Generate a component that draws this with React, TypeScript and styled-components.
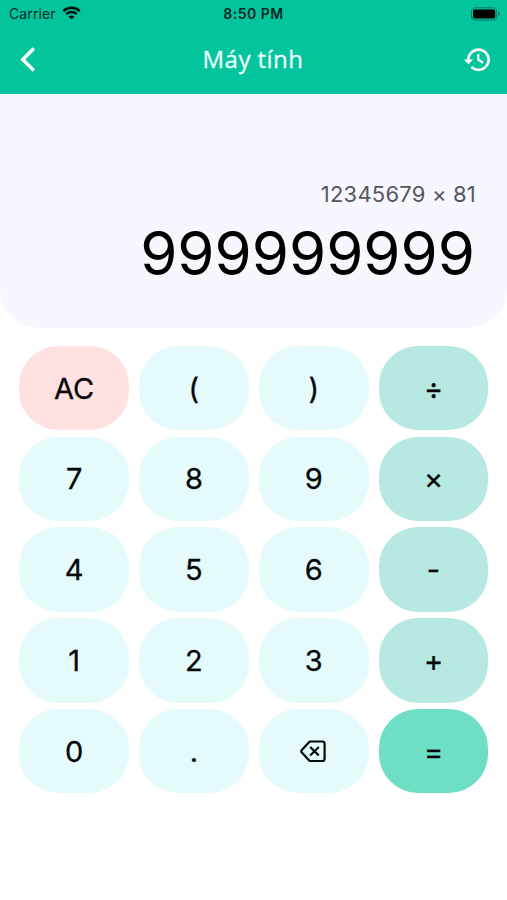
import React from "react";
import styled, { createGlobalStyle } from "styled-components";

const GlobalStyle = createGlobalStyle`
  * { box-sizing: border-box; }
  body { margin: 0; background: #fff; }
`;

const Screen = styled.div`
  width: 100%;
  height: 900px;
  display: flex;
  flex-direction: column;
  overflow: hidden;
  background: #ffffff;
  color: #050808;
  font-family: Inter, "Liberation Sans", sans-serif;
`;

const Header = styled.header`
  height: 94px;
  flex: none;
  background: #04c49e;
`;

const StatusBar = styled.div`
  height: 27px;
  padding: 0 6px 0 9px;
  display: grid;
  grid-template-columns: 1fr auto 1fr;
  align-items: center;
  color: #052a23;
`;

const Carrier = styled.div`
  display: flex;
  align-items: center;
  gap: 6px;
  font-size: 14px;
  line-height: 27px;
  letter-spacing: 0.1px;

  svg { margin-top: -2px; }
`;

const Clock = styled.div`
  font-size: 14px;
  font-weight: 600;
  line-height: 27px;
  letter-spacing: 0.5px;
  margin-right: 3px;
`;

const Battery = styled.svg`
  justify-self: end;
`;

const NavBar = styled.div`
  height: 64px;
  padding: 0 15px 0 13px;
  display: grid;
  grid-template-columns: 30px 1fr 30px;
  align-items: center;
  color: #fff;
`;

const Title = styled.h1`
  margin: 0 0 0 1px;
  text-align: center;
  font-family: "Open Sans", sans-serif;
  font-weight: 400;
  font-size: 24px;
  line-height: 64px;
  letter-spacing: 0.45px;
  -webkit-text-stroke: 0.3px currentColor;
  color: #e9fff9;
`;

const IconButton = styled.button`
  width: 30px;
  height: 30px;
  padding: 0;
  border: 0;
  background: none;
  color: inherit;
  display: flex;
  align-items: center;
  justify-content: center;
`;

const Display = styled.section`
  height: 234px;
  flex: none;
  padding: 85px 31px 0 0;
  border-radius: 0 0 39px 39px;
  background: #f6f7ff;
  text-align: right;
`;

const Expression = styled.div`
  font-size: 22px;
  line-height: 30px;
  letter-spacing: 0.2px;
  color: #56575e;
`;

const Result = styled.div`
  margin: 8px 1px 0 0;
  font-size: 60px;
  font-weight: 400;
  line-height: 72px;
  color: #000;
`;

const Keypad = styled.main`
  padding: 18px 18.6px 0 19.2px;
  display: grid;
  grid-template-columns: repeat(4, 1fr);
  grid-auto-rows: 84.4px;
  gap: 6.35px 10px;
`;

type Tone = "plain" | "clear" | "operator" | "equals";

const tones: Record<Tone, string> = {
  plain: "#e4fafb",
  clear: "#ffe1e2",
  operator: "#b7e8e2",
  equals: "#6edfc5",
};

const Key = styled.button<{ $tone: Tone }>`
  border: 0;
  padding: 1px 0 0;
  border-radius: 39px;
  background: ${(p) => tones[p.$tone]};
  color: #050808;
  font-family: inherit;
  font-size: 29px;
  font-weight: 400;
  -webkit-text-stroke: 0.3px currentColor;
  line-height: 40px;
  display: flex;
  align-items: center;
  justify-content: center;
`;

const WifiIcon = () => (
  <svg width="19" height="14" viewBox="0 0 19 14" fill="none" stroke="#03120f" strokeWidth="2.5">
    <path d="M1.3 5.1C5.9.6 13.1.6 17.7 5.1" />
    <path d="M4.3 8.2c2.9-2.8 7.5-2.8 10.4 0" />
    <path d="M9.5 13.6 6.5 10.5c1.7-1.5 4.3-1.5 6 0Z" fill="#03120f" stroke="none" />
  </svg>
);

const BatteryIcon = () => (
  <Battery width="31" height="14" viewBox="0 0 31 14" fill="none">
    <rect x="1.5" y=".8" width="25.2" height="12.4" rx="3" stroke="#087d67" />
    <rect x="3" y="2.4" width="22.2" height="9.2" rx="1.5" fill="#000" />
    <path d="M28.2 4.8c2 .8 2 3.6 0 4.4Z" fill="#087d67" />
  </Battery>
);

const BackIcon = () => (
  <svg width="18" height="26" viewBox="0 0 18 26" fill="none" stroke="currentColor" strokeWidth="3.5">
    <path d="M14.8 2.6 3.8 13.5l11 10.9" />
  </svg>
);

const HistoryIcon = () => (
  <svg width="28" height="28" viewBox="0 0 28 28" fill="none" stroke="currentColor" strokeWidth="2.6">
    <path d="M5.4 14.8A10.1 10.1 0 1 1 8.4 21.9" />
    <path d="M15.3 9.2v5.6l4.8 3" strokeWidth="2.2" />
    <path d="M.8 14.4h9.4l-4.7 4.9Z" fill="currentColor" stroke="none" />
  </svg>
);

const BackspaceIcon = () => (
  <svg width="27" height="23" viewBox="0 0 27 23" fill="none" stroke="currentColor" strokeWidth="2.2" strokeLinejoin="round">
    <path d="M9.7 1.5H22.3a2.3 2.3 0 0 1 2.3 2.3v14.9a2.3 2.3 0 0 1-2.3 2.3H9.7L1.8 12.4a1.7 1.7 0 0 1 0-2.3Z" />
    <path d="m10.2 6.9 8.6 8.7m0-8.7-8.6 8.7" />
  </svg>
);

const keys: { label: string; tone?: Tone }[] = [
  { label: "AC", tone: "clear" }, { label: "(" }, { label: ")" }, { label: "÷", tone: "operator" },
  { label: "7" }, { label: "8" }, { label: "9" }, { label: "×", tone: "operator" },
  { label: "4" }, { label: "5" }, { label: "6" }, { label: "-", tone: "operator" },
  { label: "1" }, { label: "2" }, { label: "3" }, { label: "+", tone: "operator" },
  { label: "0" }, { label: "." }, { label: "⌫" }, { label: "=", tone: "equals" },
];

export default function App() {
  return (
    <Screen>
      <GlobalStyle />
      <Header>
        <StatusBar>
          <Carrier>Carrier <WifiIcon /></Carrier>
          <Clock>8:50 PM</Clock>
          <BatteryIcon />
        </StatusBar>
        <NavBar>
          <IconButton><BackIcon /></IconButton>
          <Title>Máy tính</Title>
          <IconButton><HistoryIcon /></IconButton>
        </NavBar>
      </Header>
      <Display>
        <Expression>12345679 × 81</Expression>
        <Result>999999999</Result>
      </Display>
      <Keypad>
        {keys.map(({ label, tone = "plain" }) => (
          <Key key={label} $tone={tone}>{label === "⌫" ? <BackspaceIcon /> : label}</Key>
        ))}
      </Keypad>
    </Screen>
  );
}
